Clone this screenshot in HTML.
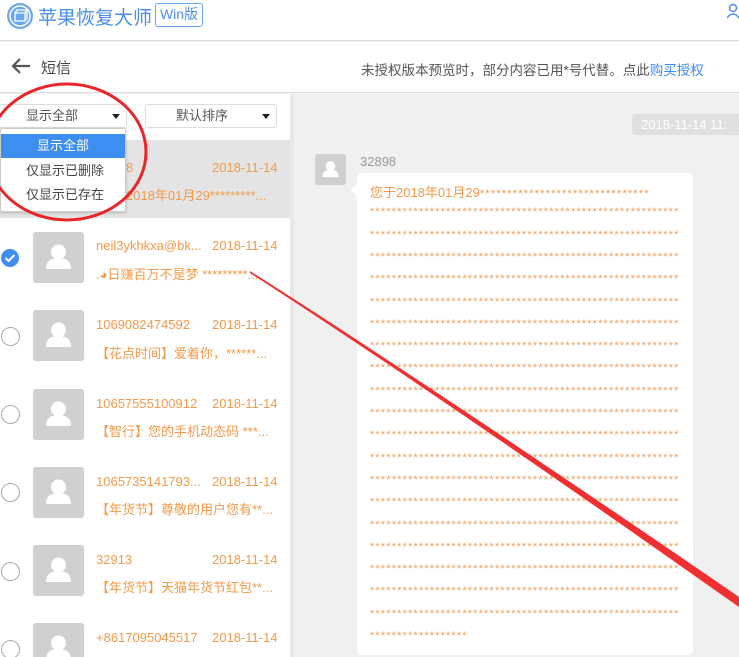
<!DOCTYPE html>
<html><head><meta charset="utf-8"><style>
*{margin:0;padding:0;box-sizing:border-box}
html,body{width:739px;height:657px;overflow:hidden}
body{background:#f0f0f0;font-family:"Liberation Sans","Noto Sans CJK SC",sans-serif;position:relative}
.abs{position:absolute}
.hdr{left:0;top:0;width:739px;height:41px;background:#fff;border-bottom:1px solid #ddd}
.sub{left:0;top:42px;width:739px;height:51px;background:#fff;border-bottom:1px solid #ddd}
.left{left:0;top:94px;width:290px;height:563px;background:#fff}
.strip{left:290px;top:94px;width:4px;height:563px;background:#e8e8e8}
.sel{border:1px solid #ddd;border-radius:3px;background:#fff;font-size:13px;color:#555;height:24px;line-height:22px}
.tri{position:absolute;right:6px;top:9px;border-left:4px solid transparent;border-right:4px solid transparent;border-top:5px solid #222}
.av{width:51px;height:51px;background:#d0d0d0;border-radius:3px;overflow:hidden}
.av svg{display:block;width:100%;height:100%}
.or{color:#f39a4a;font-size:13px}
.rad{width:19px;height:19px;border:1.5px solid #aaa;border-radius:50%;background:#fff}
.stars{left:370px;font-size:11px;color:#f3a05a;letter-spacing:1.15px;white-space:nowrap;overflow:hidden;width:310px;height:16px}
</style></head><body>
<div class="abs hdr"></div>
<svg class="abs" style="left:5px;top:1px" width="30" height="30" viewBox="0 0 30 30"><circle cx="15" cy="15" r="13" fill="#6aa8ee"/><circle cx="15" cy="15" r="10" fill="none" stroke="#fff" stroke-width="1.5"/><path d="M10 12h10v8H10z M10 12l2-3h10l-2 3M20 12l2-3v8l-2 3" fill="none" stroke="#fff" stroke-width="1.3"/></svg>
<div class="abs" style="left:38px;top:3px;font-size:19px;color:#4a90e8">苹果恢复大师</div>
<div class="abs" style="left:155px;top:3px;width:48px;height:24px;border:1.5px solid #6aa8ee;border-radius:3px;color:#4a90e8;font-size:14px;text-align:center;line-height:21px">Win版</div>
<svg class="abs" style="left:727px;top:3px" width="12" height="16"><circle cx="6" cy="5" r="3.5" fill="none" stroke="#4a90e8" stroke-width="1.5"/><path d="M0 15q6-8 12 0" fill="none" stroke="#4a90e8" stroke-width="1.5"/></svg>
<div class="abs sub"></div>
<svg class="abs" style="left:10px;top:57px" width="22" height="18"><path d="M20 9H3M10 2L3 9l7 7" fill="none" stroke="#555" stroke-width="2.2"/></svg>
<div class="abs" style="left:41px;top:57px;font-size:15px;color:#444">短信</div>
<div class="abs" style="left:361px;top:59px;font-size:13.5px;color:#555;white-space:nowrap">未授权版本预览时，部分内容已用*号代替。点此<span style="color:#3b8cf0">购买授权</span></div>
<div class="abs left"></div><div class="abs strip"></div>
<div class="abs sel" style="left:-3px;top:104px;width:130px;padding-left:28px">显示全部<div class="tri"></div></div>
<div class="abs sel" style="left:145px;top:104px;width:132px;padding-left:30px">默认排序<div class="tri"></div></div>
<div class="abs" style="left:0;top:140px;width:290px;height:78px;background:#e4e4e4"></div>
<div class="abs or" style="left:126px;top:160px">8</div>
<div class="abs or" style="left:212px;top:160px">2018-11-14</div>
<div class="abs or" style="left:126px;top:185px">2018年01月29*********...</div>
<div class="abs" style="left:0;top:128px;width:126px;height:84px;background:#fff;border:1px solid #ccc;border-radius:2px;box-shadow:0 1px 3px rgba(0,0,0,.2)">
<div style="height:24px;margin-top:5px;background:#3d8ef0;color:#fff;font-size:13px;text-align:center;line-height:24px">显示全部</div>
<div style="font-size:13px;color:#444;text-align:center;line-height:25px;padding-left:4px">仅显示已删除</div>
<div style="font-size:13px;color:#444;text-align:center;line-height:24px;padding-left:4px">仅显示已存在</div></div>
<svg class="abs" style="left:0;top:248px" width="20" height="20"><circle cx="10" cy="10" r="9" fill="#3d8ef0"/><path d="M5.5 10l3 3 6-6" fill="none" stroke="#fff" stroke-width="2"/></svg>
<div class="abs rad" style="left:1px;top:327px"></div>
<div class="abs rad" style="left:1px;top:405px"></div>
<div class="abs rad" style="left:1px;top:483px"></div>
<div class="abs rad" style="left:1px;top:562px"></div>
<div class="abs rad" style="left:1px;top:640px"></div>
<div id="avs"></div>
<div class="abs or" style="left:96px;top:238px">neil3ykhkxa@bk...</div><div class="abs or" style="left:212px;top:238px">2018-11-14</div>
<div class="abs or" style="left:96px;top:264px">.◕日赚百万不是梦 *********...</div>
<div class="abs or" style="left:96px;top:317px">1069082474592</div><div class="abs or" style="left:212px;top:317px">2018-11-14</div>
<div class="abs or" style="left:96px;top:343px">【花点时间】爱着你，******...</div>
<div class="abs or" style="left:96px;top:396px">10657555100912</div><div class="abs or" style="left:212px;top:396px">2018-11-14</div>
<div class="abs or" style="left:96px;top:421px">【智行】您的手机动态码 ***...</div>
<div class="abs or" style="left:96px;top:474px">1065735141793...</div><div class="abs or" style="left:212px;top:474px">2018-11-14</div>
<div class="abs or" style="left:96px;top:499px">【年货节】尊敬的用户您有**...</div>
<div class="abs or" style="left:96px;top:552px">32913</div><div class="abs or" style="left:212px;top:552px">2018-11-14</div>
<div class="abs or" style="left:96px;top:577px">【年货节】天猫年货节红包**...</div>
<div class="abs or" style="left:96px;top:630px">+8617095045517</div><div class="abs or" style="left:212px;top:630px">2018-11-14</div>
<div class="abs" style="left:632px;top:114px;width:120px;height:21px;background:#e0e0e0;border-radius:4px;color:#fff;font-size:13px;line-height:21px;padding-left:9px;white-space:nowrap">2018-11-14 11:</div>
<div class="abs av" style="left:315px;top:154px;width:31px;height:31px"><svg viewBox="0 0 51 51"><circle cx="25.5" cy="20" r="8" fill="#fff"/><path d="M12 38q0-12 13.5-12t13.5 12z" fill="#fff"/></svg></div>
<div class="abs" style="left:360px;top:154px;font-size:13px;color:#999">32898</div>
<div class="abs" style="left:357px;top:173px;width:336px;height:482px;background:#fff;border-radius:5px"></div>
<div class="abs" style="left:351px;top:184px;width:0;height:0;border-top:6px solid transparent;border-bottom:6px solid transparent;border-right:6px solid #fff"></div>
<div class="abs" style="left:370px;top:182px;font-size:13px;color:#f39a4a;white-space:nowrap">您于2018年01月29<span style="font-size:11px;letter-spacing:1.2px">*******************************</span></div>
<div id="st"></div>
<script>
var h='';for(var i=1;i<21;i++){h+='<div class="abs stars" style="top:'+(184+i*22.3)+'px">'+'*'.repeat(i==20?18:60)+'</div>';}
document.getElementById('st').innerHTML=h;
var a='',ys=[232,310,389,467,545,623];
ys.forEach(function(y){a+='<div class="abs av" style="left:33px;top:'+y+'px"><svg viewBox="0 0 51 51"><circle cx="25.5" cy="20" r="7.5" fill="#fff"/><path d="M13 37q0-11 12.5-11t12.5 11z" fill="#fff"/></svg></div>';});
document.getElementById('avs').innerHTML=a;
</script>
<svg class="abs" style="left:0;top:0" width="739" height="657">
<ellipse cx="67" cy="152" rx="79" ry="68" fill="none" stroke="#e8262a" stroke-width="3"/>
<path d="M250 271 Q 430 385 739 597 L739 607 Q 430 389 250 273 Z" fill="#f03030"/>
</svg>
</body></html>
